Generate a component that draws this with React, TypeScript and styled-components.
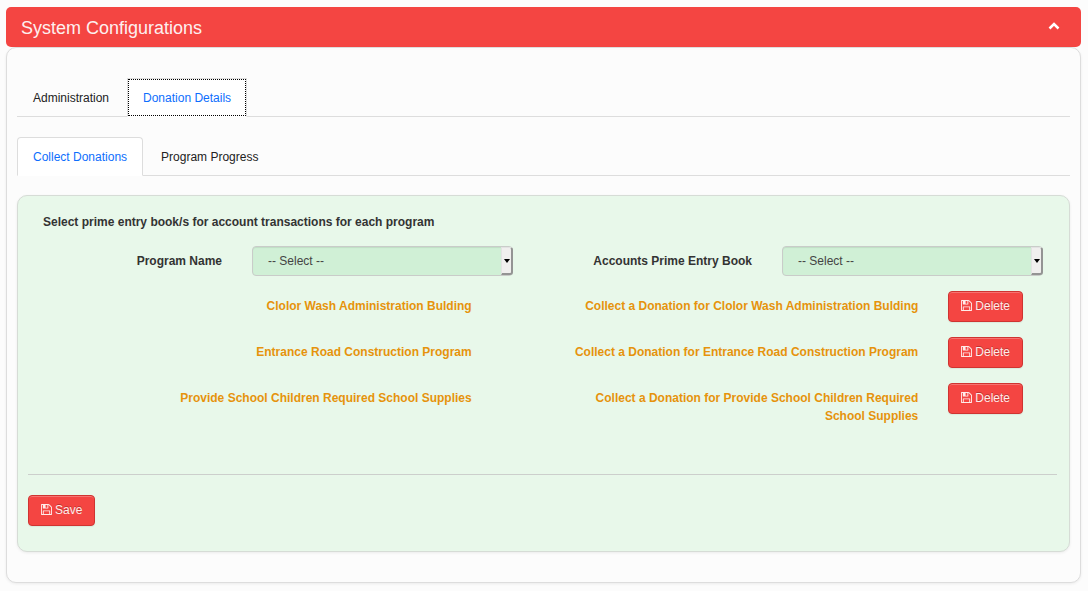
import React, { useState } from "react";
import styled, { createGlobalStyle } from "styled-components";

const GlobalStyle = createGlobalStyle`
  * { box-sizing: border-box; }
  body {
    margin: 0;
    background: #fcfcfc;
    color: #333333;
    font-family: "Liberation Sans", Arial, sans-serif;
    font-size: 12px;
    line-height: 18px;
  }
  button, select { font: inherit; }
`;

const Page = styled.main`
  padding: 7px 7px 7px 6px;
`;

const Header = styled.header`
  display: flex;
  align-items: center;
  justify-content: space-between;
  height: 40px;
  padding: 0 21px 0 15px;
  border-radius: 5px;
  background: #f44542;
  color: #ffffff;
`;

const Title = styled.h1`
  margin: 0;
  padding-top: 2px;
  font-size: 18px;
  font-weight: 400;
  line-height: 24px;
  color: #fdf0ef;
`;

const Collapse = styled.button`
  display: flex;
  padding: 0 0 2px;
  border: 0;
  background: none;
  color: #ffffff;
  cursor: pointer;
`;

const Card = styled.section`
  padding: 30px 10px;
  border: 1px solid #dddddd;
  border-radius: 10px;
  background: #fcfcfc;
  box-shadow: 0 1px 3px rgba(0, 0, 0, 0.07);
`;

const Tabs = styled.div.attrs({ role: "tablist" })`
  display: flex;
  gap: 2px;
  height: 39px;
  margin-bottom: 20px;
  border-bottom: 1px solid #dddddd;
  & + & { margin-bottom: 19px; }
`;

const Tab = styled.button.attrs({ role: "tab", type: "button" })<{ $active: boolean; $focused?: boolean }>`
  height: 39px;
  padding: 0 15px;
  border: 1px solid ${(p) => (p.$active ? "#dddddd" : "transparent")};
  border-bottom-color: ${(p) => (p.$active ? "#ffffff" : "transparent")};
  border-radius: ${(p) => (p.$focused ? "0" : "4px 4px 0 0")};
  background: ${(p) => (p.$active ? "#ffffff" : "transparent")};
  color: ${(p) => (p.$active ? "#0d6efd" : "#222222")};
  outline: ${(p) => (p.$focused ? "1px dotted #000000" : "none")};
  outline-offset: -2px;
  cursor: pointer;
`;

const Panel = styled.form`
  padding: 17px 12px 25px 10px;
  border: 1px solid #d6dcd6;
  border-radius: 10px;
  background: #e8f8ea;
  box-shadow: 0 1px 3px rgba(0, 0, 0, 0.07);
`;

const Intro = styled.p`
  margin: 0 15px 15px;
  font-weight: 700;
`;

const Fields = styled.div`
  display: grid;
  grid-template-columns: 194fr 261fr 209fr 261fr;
  column-gap: 30px;
  align-items: center;
  margin: 0 14px 15px 0;
`;

const Label = styled.label`
  font-weight: 700;
  text-align: right;
`;

const SelectBox = styled.div`
  position: relative;
  height: 30px;
`;

const Select = styled.select`
  width: 100%;
  height: 30px;
  padding: 0 15px;
  border: 1px solid #c9ccc9;
  border-radius: 4px;
  background: #d0f0d6;
  box-shadow: inset 0 1px 1px rgba(0, 0, 0, 0.08);
  color: #444444;
  appearance: none;
`;

const Arrow = styled.span`
  position: absolute;
  top: 1px;
  right: 0;
  bottom: 1px;
  display: flex;
  align-items: center;
  justify-content: center;
  width: 12px;
  border: solid;
  border-width: 1px 2px 2px 1px;
  border-color: #e3e3e3 #949494 #949494 #e3e3e3;
  border-radius: 0 3px 3px 0;
  background: #f0efee;
  pointer-events: none;
  &::after {
    content: "";
    border: 3px solid transparent;
    border-top: 4px solid #000000;
    border-bottom: 0;
  }
`;

const Entries = styled.ul`
  display: flex;
  flex-direction: column;
  gap: 15px;
  min-height: 168px;
  margin: 0;
  padding: 0;
  list-style: none;
`;

const Entry = styled.li`
  display: grid;
  grid-template-columns: 444fr 477fr auto;
  align-items: start;
  margin-right: 34px;
`;

const EntryText = styled.span`
  padding: 6px 0 0;
  color: #e6930c;
  font-weight: 700;
  text-align: right;
  & + & { margin: 0 30px 0 90px; }
`;

const ActionButton = styled.button`
  display: inline-flex;
  align-items: center;
  gap: 3px;
  height: 31px;
  padding: 0 12px 2px;
  border: 1px solid #cf3431;
  border-radius: 4px;
  background: #f44542;
  box-shadow: inset 0 1px 0 rgba(255, 255, 255, 0.25), 0 1px 1px rgba(0, 0, 0, 0.06);
  color: #ffecea;
  text-shadow: 0 -1px 0 rgba(0, 0, 0, 0.25);
  cursor: pointer;
`;

const Divider = styled.hr`
  height: 1px;
  margin: 15px 0 20px;
  border: 0;
  background: #cccfcc;
`;

const SaveIcon = () => (
  <svg width="11" height="11" viewBox="0 0 1536 1536" fill="currentColor" aria-hidden="true">
    <path d="M384 1408h768v-384h-768v384zm896 0h128v-896q0-14-10-38.5t-20-34.5l-281-281q-10-10-34-20t-39-10v416q0 40-28 68t-68 28h-576q-40 0-68-28t-28-68v-416h-128v1280h128v-416q0-40 28-68t68-28h832q40 0 68 28t28 68v416zm-384-928v-320q0-13-9.5-22.5t-22.5-9.5h-192q-13 0-22.5 9.5t-9.5 22.5v320q0 13 9.5 22.5t22.5 9.5h192q13 0 22.5-9.5t9.5-22.5zm640 32v928q0 40-28 68t-68 28h-1344q-40 0-68-28t-28-68v-1344q0-40 28-68t68-28h928q40 0 88 20t76 48l280 280q28 28 48 76t20 88z" />
  </svg>
);

const programs = [
  "Clolor Wash Administration Bulding",
  "Entrance Road Construction Program",
  "Provide School Children Required School Supplies",
];

function SelectField({ id, label }: { id: string; label: string }) {
  return (
    <>
      <Label htmlFor={id}>{label}</Label>
      <SelectBox>
        <Select id={id}>
          <option>-- Select --</option>
        </Select>
        <Arrow />
      </SelectBox>
    </>
  );
}

export default function App() {
  const [section, setSection] = useState("Donation Details");
  const [view, setView] = useState("Collect Donations");

  return (
    <Page>
      <GlobalStyle />
      <Header>
        <Title>System Configurations</Title>
        <Collapse type="button" aria-label="Collapse">
          <svg width="12" height="8" viewBox="0 0 12 8" fill="none" stroke="currentColor" strokeWidth="2.5">
            <path d="M1.5 6.5 6 2l4.5 4.5" />
          </svg>
        </Collapse>
      </Header>
      <Card>
        <Tabs>
          {["Administration", "Donation Details"].map((name) => (
            <Tab
              key={name}
              $active={section === name}
              $focused={section === name}
              aria-selected={section === name}
              onClick={() => setSection(name)}
            >
              {name}
            </Tab>
          ))}
        </Tabs>
        <Tabs>
          {["Collect Donations", "Program Progress"].map((name) => (
            <Tab key={name} $active={view === name} aria-selected={view === name} onClick={() => setView(name)}>
              {name}
            </Tab>
          ))}
        </Tabs>
        <Panel onSubmit={(e) => e.preventDefault()}>
          <Intro>Select prime entry book/s for account transactions for each program</Intro>
          <Fields>
            <SelectField id="program" label="Program Name" />
            <SelectField id="book" label="Accounts Prime Entry Book" />
          </Fields>
          <Entries>
            {programs.map((name) => (
              <Entry key={name}>
                <EntryText>{name}</EntryText>
                <EntryText>Collect a Donation for {name}</EntryText>
                <ActionButton type="button">
                  <SaveIcon />
                  Delete
                </ActionButton>
              </Entry>
            ))}
          </Entries>
          <Divider />
          <ActionButton type="submit">
            <SaveIcon />
            Save
          </ActionButton>
        </Panel>
      </Card>
    </Page>
  );
}
